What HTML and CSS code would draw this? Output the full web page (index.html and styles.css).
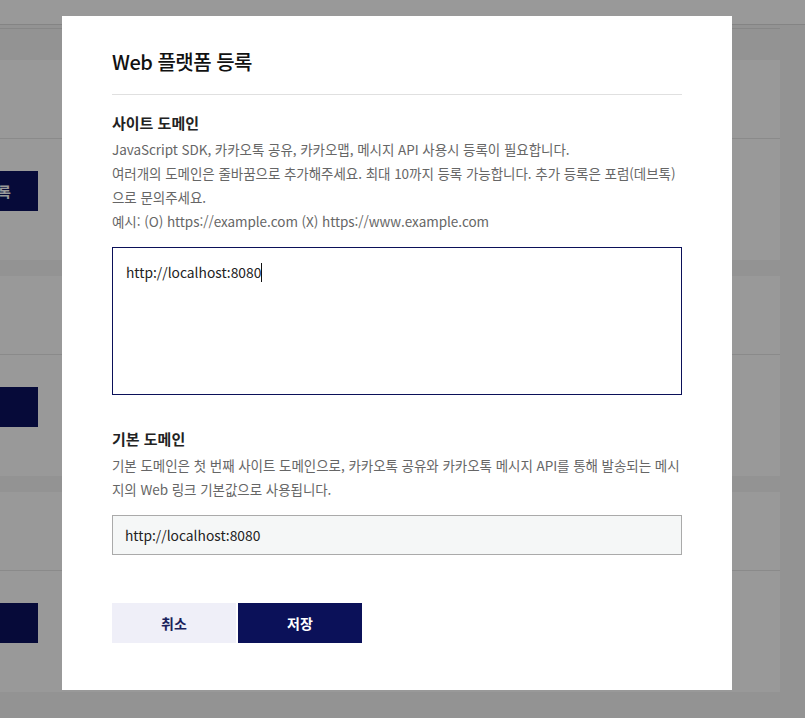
FILE: index.html
```html
<!DOCTYPE html>
<html lang="ko">
<head>
<meta charset="utf-8">
<title>Web 플랫폼 등록</title>
<link rel="stylesheet" href="styles.css">
</head>
<body>
<div class="page">
  <div class="page-header"></div>
  <div class="content">
    <div class="tabs"></div>
    <div class="cards">
      <div class="card">
        <div class="card-top"></div>
        <div class="card-body"><button class="card-btn">등록</button></div>
      </div>
      <div class="card">
        <div class="card-top"></div>
        <div class="card-body"><button class="card-btn"></button></div>
      </div>
      <div class="card">
        <div class="card-top"></div>
        <div class="card-body"><button class="card-btn"></button></div>
      </div>
    </div>
  </div>
</div>

<div class="overlay">
  <div class="modal">
    <h1 class="modal-title">Web 플랫폼 등록</h1>
    <section class="field">
      <h2 class="field-title">사이트 도메인</h2>
      <p class="field-desc">JavaScript SDK, 카카오톡 공유, 카카오맵, 메시지 API 사용시 등록이 필요합니다.<br>여러개의 도메인은 줄바꿈으로 추가해주세요. 최대 10까지 등록 가능합니다. 추가 등록은 포럼(데브톡)으로 문의주세요.<br>예시: (O) https://example.com (X) https://www.example.com</p>
      <div class="textarea" lang="en">http://localhost:8080<span class="caret"></span></div>
    </section>
    <section class="field field-second">
      <h2 class="field-title">기본 도메인</h2>
      <p class="field-desc">기본 도메인은 첫 번째 사이트 도메인으로, 카카오톡 공유와 카카오톡 메시지 API를 통해 발송되는 메시지의 Web 링크 기본값으로 사용됩니다.</p>
      <div class="input" lang="en">http://localhost:8080</div>
    </section>
    <div class="actions">
      <button class="btn btn-cancel">취소</button>
      <button class="btn btn-save">저장</button>
    </div>
  </div>
</div>
</body>
</html>
```
FILE: styles.css
```css
* { box-sizing: border-box; }
html, body { margin: 0; padding: 0; }
body {
  background: #f5f5f5;
  font-family: "Noto Sans CJK KR", "Noto Sans", sans-serif;
  width: 805px;
  height: 718px;
  overflow: hidden;
}
.page-header {
  height: 25px;
  background: #fff;
  border-bottom: 1px solid #dcdcdc;
}
.content {
  margin-left: -120px;
  width: 900px;
}
.tabs {
  height: 4px;
  border-bottom: 1px solid #e2e2e2;
}
.cards {
  padding-top: 31px;
  display: flex;
  flex-direction: column;
  gap: 16px;
}
.card {
  height: 200px;
  background: #fff;
  display: flex;
  flex-direction: column;
}
.card-top {
  height: 79px;
  border-bottom: 1px solid #e6e6e6;
}
.card-body {
  padding: 32px 0 0 78px;
}
.card-btn {
  width: 80px;
  height: 40px;
  border: 0;
  background: #0a1160;
  color: #fff;
  font-family: inherit;
  font-size: 14px;
  font-weight: 700;
  padding: 0;
}
.overlay {
  position: fixed;
  inset: 0;
  background: rgba(0, 0, 0, 0.4);
  padding: 16px 0 0 62px;
}
.modal {
  width: 670px;
  background: #fff;
  padding: 31px 50px 47px;
}
.modal-title {
  margin: 0;
  font-size: 20px;
  line-height: 30px;
  font-weight: 500;
  letter-spacing: -0.5px;
  color: #111;
  padding-bottom: 17px;
  border-bottom: 1px solid #e0e0e0;
}
.field { margin-top: 16px; }
.field-second { margin-top: 32px; }
.field-title {
  margin: 0;
  font-size: 15px;
  line-height: 24px;
  font-weight: 700;
  color: #222;
}
.field-desc {
  margin: 2px 0 0;
  font-size: 13.5px;
  line-height: 24px;
  letter-spacing: -0.05px;
  color: #666;
}
.textarea {
  margin-top: 14px;
  height: 148px;
  border: 1px solid #0b1159;
  padding: 12px 13px;
  font-size: 13.8px;
  line-height: 24px;
  color: #222;
}
.caret {
  display: inline-block;
  width: 1px;
  height: 19px;
  background: #111;
  vertical-align: -4px;
}
.input {
  margin-top: 14px;
  height: 40px;
  border: 1px solid #aaa;
  background: #f5f7f7;
  padding: 0 12px;
  font-size: 13.8px;
  line-height: 38px;
  color: #222;
}
.actions {
  margin-top: 48px;
  display: flex;
  gap: 2px;
}
.btn {
  width: 124px;
  height: 40px;
  border: 0;
  padding: 0;
  font-family: inherit;
  font-size: 14px;
  font-weight: 700;
}
.btn-cancel { background: #efeff8; color: #1a1f5c; }
.btn-save { background: #0b1159; color: #fff; }
```
